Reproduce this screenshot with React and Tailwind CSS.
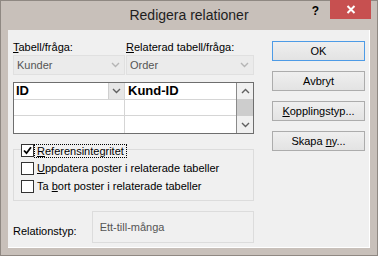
import React from "react";

const Chevron = ({ up, color = "#555" }) => (
  <svg width="9" height="6" viewBox="0 0 9 6">
    <polyline
      points={up ? "1,5 4.5,1.5 8,5" : "1,1 4.5,4.5 8,1"}
      fill="none"
      stroke={color}
      strokeWidth="1.4"
    />
  </svg>
);

const CheckBox = ({ checked }) => (
  <span className="w-[13px] h-[13px] border border-[#333] bg-white flex items-center justify-center shrink-0">
    {checked && (
      <svg width="9" height="9" viewBox="0 0 9 9">
        <path d="M1 4.5 L3.5 7.2 L8 1.2" fill="none" stroke="#000" strokeWidth="1.8" />
      </svg>
    )}
  </span>
);

const Button = ({ children, primary }) => (
  <button
    type="button"
    className={
      "h-[20px] w-[93px] flex items-center justify-center text-[11px] text-black bg-gradient-to-b from-[#efefef] to-[#e3e3e3] border " +
      (primary ? "border-[#4d9be6]" : "border-[#acacac]")
    }
  >
    {children}
  </button>
);

const GridRow = ({ left, right, arrow, last }) => (
  <div className={"flex h-[17px] " + (last ? "" : "border-b border-[#d5d5d5]")}>
    <div className="w-[111px] flex items-center border-r border-[#d5d5d5]">
      <span className="flex-1 pl-[2px] font-bold text-[13px] leading-none">{left}</span>
      {arrow && (
        <span className="w-[16px] h-full bg-[#e6e6e6] border-l border-[#cfcfcf] flex items-center justify-center">
          <Chevron color="#606060" />
        </span>
      )}
    </div>
    <div className="w-[111px] flex items-center pl-[3px] font-bold text-[13px] leading-none">{right}</div>
  </div>
);

export default function App() {
  return (
    <div className="w-[378px] h-[256px] bg-[#c8c0ba] border border-[#8f8882] flex flex-col font-['Liberation_Sans',Arial,sans-serif] text-black select-none">
      {/* Title bar */}
      <div className="h-[29px] flex items-start">
        <div className="flex-1" />
        <div className="pt-[7px] text-[14px] leading-none text-[#1e1e1e]">Redigera relationer</div>
        <div className="flex-1 flex justify-end items-start">
          <span className="mt-[4px] mr-[11px] text-[12px] font-bold leading-none">?</span>
          <span className="w-[41px] h-[19px] bg-[#c75050] flex items-center justify-center mr-[6px] -mt-[1px]">
            <svg width="10" height="9" viewBox="0 0 10 9">
              <path d="M1.5 1 L8.5 8 M8.5 1 L1.5 8" stroke="#fff" strokeWidth="2" />
            </svg>
          </span>
        </div>
      </div>

      {/* Client area */}
      <div className="mx-[7px] h-[218px] bg-[#f0f0f0] border-r border-b border-white flex pl-[5px]">
        {/* Left column */}
        <div className="w-[241px] flex flex-col text-[11px]">
          <div className="flex pt-[10px] h-[24px] leading-[14px]">
            <span className="w-[113px]">
              <span className="underline">T</span>abell/fråga:
            </span>
            <span>
              <span className="underline">R</span>elaterad tabell/fråga:
            </span>
          </div>
          <div className="flex gap-[1px] mt-[1px] h-[20px]">
            <div className="w-[112px] bg-[#ebebeb] border border-[#e0e0e0] flex items-center pl-[3px] pr-[4px] text-[#555]">
              <span className="flex-1">Kunder</span>
              <Chevron color="#b5b5b5" />
            </div>
            <div className="flex-1 bg-[#ebebeb] border border-[#e0e0e0] flex items-center pl-[3px] pr-[4px] text-[#555]">
              <span className="flex-1">Order</span>
              <Chevron color="#b5b5b5" />
            </div>
          </div>

          {/* Field grid */}
          <div className="mt-[7px] h-[52px] border border-[#6e6e6e] bg-white flex">
            <div className="w-[222px] flex flex-col">
              <GridRow left="ID" right="Kund-ID" arrow />
              <GridRow />
              <GridRow last />
            </div>
            <div className="flex-1 border-l border-[#8a8a8a] bg-[#f0f0f0] flex flex-col items-center">
              <div className="h-[16px] flex items-center">
                <Chevron up color="#606060" />
              </div>
              <div className="w-full h-[17px] bg-[#cdcdcd]" />
              <div className="flex-1 flex items-center">
                <Chevron color="#606060" />
              </div>
            </div>
          </div>

          {/* Referential integrity group */}
          <div className="mt-[15px] h-[52px] border border-[#dcdcdc] flex flex-col pl-[7px] gap-[5px]">
            <div className="-mt-[6px] flex items-center gap-[1px] w-fit bg-[#f0f0f0] h-[13px]">
              <CheckBox checked />
              <span className="outline-1 outline-dotted outline-black px-[2px] leading-[12px]">
                <span className="underline">R</span>eferensintegritet
              </span>
            </div>
            <div className="flex items-center gap-[3px] h-[13px]">
              <CheckBox />
              <span>
                <span className="underline">U</span>ppdatera poster i relaterade tabeller
              </span>
            </div>
            <div className="flex items-center gap-[3px] h-[13px]">
              <CheckBox />
              <span>
                Ta <span className="underline">b</span>ort poster i relaterade tabeller
              </span>
            </div>
          </div>

          {/* Relation type */}
          <div className="mt-[10px] flex items-start">
            <span className="w-[79px] mt-[12px]">Relationstyp:</span>
            <div className="w-[163px] h-[32px] border border-[#dcdcdc] pl-[7px] pt-[7px] text-[#555]">
              Ett-till-många
            </div>
          </div>
        </div>

        {/* Buttons */}
        <div className="ml-[18px] mt-[11px] flex flex-col gap-[10px]">
          <Button primary>OK</Button>
          <Button>Avbryt</Button>
          <Button>
            <span>
              <span className="underline">K</span>opplingstyp...
            </span>
          </Button>
          <Button>
            <span>
              Skapa <span className="underline">n</span>y...
            </span>
          </Button>
        </div>
      </div>
    </div>
  );
}
